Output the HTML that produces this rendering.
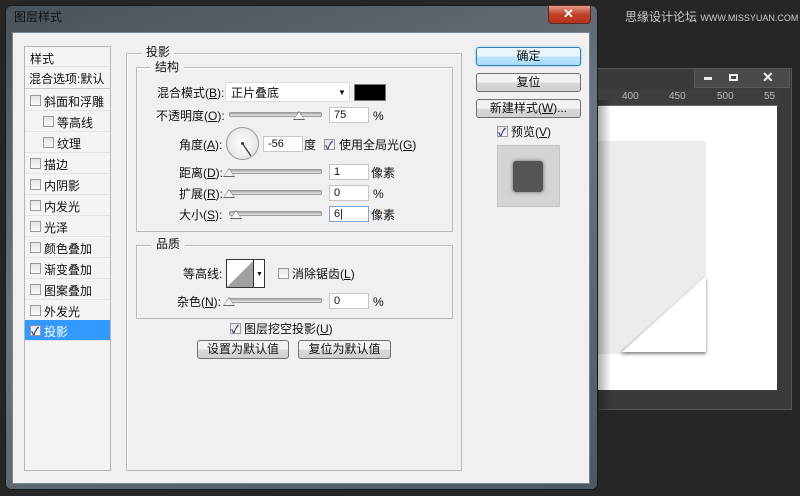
<!DOCTYPE html>
<html><head><meta charset="utf-8"><style>
*{margin:0;padding:0;box-sizing:border-box}
body{width:800px;height:496px;background:#262626;position:relative;overflow:hidden;font-family:"Liberation Sans","Noto Sans CJK SC",sans-serif;font-size:12px;color:#111}
.a{position:absolute}
.t{position:absolute;white-space:nowrap;line-height:14px}
.box{position:absolute;border:1px solid #b9b9b9;box-shadow:inset 1px 1px 0 #fff}
.cb{position:absolute;width:11px;height:11px;border:1px solid #9a9a9a;background:linear-gradient(#e4e4e4,#fafafa)}
.ck::after{content:"✓";position:absolute;left:0;top:-3px;font-size:11px;color:#2a3f8a;font-weight:bold}
.in{position:absolute;background:#fff;border:1px solid #c6c6c6;height:16px;font-size:11px;padding-left:4px;line-height:14px}
.sl{position:absolute;height:5px;border:1px solid #9c9c9c;border-radius:2px;background:linear-gradient(#aaa,#e6e6e6)}
.th{position:absolute;width:0;height:0;border-left:6px solid transparent;border-right:6px solid transparent;border-bottom:9px solid #666}
.th::after{content:"";position:absolute;left:-5px;top:1px;border-left:5px solid transparent;border-right:5px solid transparent;border-bottom:7px solid #f2f2f2}
.btn{position:absolute;height:19px;border:1px solid #707070;border-radius:3px;background:linear-gradient(#f2f2f2 50%,#d9d9d9 50%,#cfcfcf);text-align:center;line-height:17px;font-size:12px}
.li{position:absolute;left:25px;width:85px;height:21px;border-bottom:1px solid #e3e3e3}
.li .cb{left:5px;top:5px}
.li span{position:absolute;left:19px;top:3px}
</style></head><body>
<div class="t" style="left:625px;top:10px;color:#ccc;font-size:12px">思缘设计论坛 <span style="font-size:9px;letter-spacing:0">WWW.MISSYUAN.COM</span></div>
<div class="a" style="left:595px;top:68px;width:197px;height:342px;background:#3a3a3a;border:1px solid #555"></div>
<div class="a" style="left:694px;top:68px;width:96px;height:20px;background:#4a4a4a;border:1px solid #5a5a5a"></div>
<div class="a" style="left:704px;top:77px;width:8px;height:3px;background:#eee"></div>
<div class="a" style="left:729px;top:74px;width:9px;height:7px;border:2px solid #eee"></div>
<div class="t" style="left:762px;top:70px;color:#eee;font-size:14px;font-weight:bold">✕</div>
<div class="a" style="left:598px;top:90px;width:180px;height:16px;background:#3e3e3e;border-bottom:1px solid #666"></div>
<div class="t" style="left:622px;top:90px;color:#bbb;font-size:10px">400</div>
<div class="t" style="left:669px;top:90px;color:#bbb;font-size:10px">450</div>
<div class="t" style="left:717px;top:90px;color:#bbb;font-size:10px">500</div>
<div class="t" style="left:764px;top:90px;color:#bbb;font-size:10px">55</div>
<div class="a" style="left:598px;top:106px;width:179px;height:284px;background:#fff"></div>
<div class="a" style="left:598px;top:141px;width:108px;height:213px;background:#ececec"></div>
<svg class="a" style="left:598px;top:270px" width="112" height="90"><defs><filter id="f"><feGaussianBlur stdDeviation="1.5"/></filter></defs><polygon points="108,8 108,84 22,84" fill="#888" filter="url(#f)"/><polygon points="108,6 108,82 24,82" fill="#fff"/></svg>
<div class="a" style="left:597px;top:100px;width:14px;height:310px;background:linear-gradient(90deg,rgba(0,0,0,.35),rgba(0,0,0,0))"></div>
<div class="a" style="left:5px;top:5px;width:593px;height:485px;border-radius:6px;background:linear-gradient(160deg,#4a525a,#6a747c 45%,#4e5860);border:1px solid #1a1a1a"></div>
<div class="t" style="left:14px;top:10px;color:#111;font-size:12px">图层样式</div>
<div class="a" style="left:548px;top:5px;width:43px;height:19px;border-radius:0 0 4px 4px;background:linear-gradient(#e39a8a,#c1412a 50%,#b5321e);border:1px solid #5a2a22"></div>
<div class="t" style="left:563px;top:7px;color:#fff;font-size:13px;font-weight:bold">✕</div>
<div class="a" style="left:12px;top:32px;width:578px;height:452px;background:#f0f0f0;border:1px solid #7b8691"></div>
<div class="a" style="left:24px;top:46px;width:87px;height:425px;background:#f4f4f4;border:1px solid #b6b6b6"></div>
<div class="li" style="top:47px;height:20px"><span style="left:5px">样式</span></div>
<div class="li" style="top:67px;height:22px;border-bottom:1px solid #c8c8c8"><span style="left:4px;top:3px">混合选项:默认</span></div>
<div class="li" style="top:90px"><div class="cb"></div><span>斜面和浮雕</span></div>
<div class="li" style="top:111px"><div class="cb" style="left:18px"></div><span style="left:32px">等高线</span></div>
<div class="li" style="top:132px"><div class="cb" style="left:18px"></div><span style="left:32px">纹理</span></div>
<div class="li" style="top:153px"><div class="cb"></div><span>描边</span></div>
<div class="li" style="top:174px"><div class="cb"></div><span>内阴影</span></div>
<div class="li" style="top:195px"><div class="cb"></div><span>内发光</span></div>
<div class="li" style="top:216px"><div class="cb"></div><span>光泽</span></div>
<div class="li" style="top:237px"><div class="cb"></div><span>颜色叠加</span></div>
<div class="li" style="top:258px"><div class="cb"></div><span>渐变叠加</span></div>
<div class="li" style="top:279px"><div class="cb"></div><span>图案叠加</span></div>
<div class="li" style="top:300px"><div class="cb"></div><span>外发光</span></div>
<div class="li" style="top:320px;background:#3399ff;color:#fff"><div class="cb ck"></div><span>投影</span></div>
<div class="box" style="left:126px;top:53px;width:336px;height:418px"></div>
<div class="t" style="left:142px;top:45px;background:#f0f0f0;padding:0 4px">投影</div>
<div class="box" style="left:136px;top:67px;width:317px;height:165px"></div>
<div class="t" style="left:150px;top:60px;background:#f0f0f0;padding:0 5px">结构</div>
<div class="t" style="left:157px;top:86px">混合模式(<u>B</u>):</div>
<div class="a" style="left:225px;top:82px;width:125px;height:20px;background:#fff;border:1px solid #ddd"></div>
<div class="t" style="left:231px;top:86px">正片叠底</div>
<div class="t" style="left:338px;top:86px;font-size:8px">▼</div>
<div class="a" style="left:354px;top:84px;width:32px;height:17px;background:#000;border:1px solid #777"></div>
<div class="t" style="left:156px;top:109px">不透明度(<u>O</u>):</div>
<div class="sl" style="left:229px;top:112px;width:93px"></div><div class="th" style="left:293px;top:111px"></div>
<div class="in" style="left:329px;top:107px;width:40px">75</div><div class="t" style="left:373px;top:109px">%</div>
<div class="t" style="left:179px;top:138px">角度(<u>A</u>):</div>
<div class="a" style="left:226px;top:127px;width:33px;height:33px;border-radius:50%;border:1px solid #999;background:radial-gradient(#fff,#ddd)"></div>
<svg class="a" style="left:226px;top:127px" width="33" height="33"><line x1="16.5" y1="16.5" x2="25" y2="29" stroke="#333" stroke-width="1.2"/><circle cx="16.5" cy="16.5" r="1.5" fill="#333"/></svg>
<div class="in" style="left:263px;top:136px;width:40px">-56</div>
<div class="t" style="left:304px;top:138px">度</div>
<div class="cb ck" style="left:324px;top:139px"></div>
<div class="t" style="left:339px;top:138px">使用全局光(<u>G</u>)</div>
<div class="t" style="left:179px;top:166px">距离(<u>D</u>):</div>
<div class="sl" style="left:229px;top:169px;width:93px"></div><div class="th" style="left:223px;top:168px"></div>
<div class="in" style="left:329px;top:164px;width:40px">1</div><div class="t" style="left:371px;top:166px">像素</div>
<div class="t" style="left:179px;top:187px">扩展(<u>R</u>):</div>
<div class="sl" style="left:229px;top:190px;width:93px"></div><div class="th" style="left:223px;top:189px"></div>
<div class="in" style="left:329px;top:185px;width:40px">0</div><div class="t" style="left:373px;top:187px">%</div>
<div class="t" style="left:179px;top:208px">大小(<u>S</u>):</div>
<div class="sl" style="left:229px;top:211px;width:93px"></div><div class="th" style="left:230px;top:210px"></div>
<div class="in" style="left:329px;top:206px;width:40px;border-color:#7aa7d6">6|</div><div class="t" style="left:371px;top:208px">像素</div>
<div class="box" style="left:136px;top:245px;width:317px;height:74px"></div>
<div class="t" style="left:151px;top:237px;background:#f0f0f0;padding:0 5px">品质</div>
<div class="t" style="left:183px;top:267px">等高线:</div>
<div class="a" style="left:226px;top:259px;width:39px;height:29px;background:#fff;border:1px solid #333"></div>
<svg class="a" style="left:227px;top:260px" width="28" height="27"><polygon points="27,0 27,27 0,27" fill="#a0a0a0"/></svg>
<div class="a" style="left:253px;top:260px;width:1px;height:27px;background:#333"></div>
<div class="t" style="left:256px;top:268px;font-size:7px">▼</div>
<div class="cb" style="left:278px;top:268px"></div>
<div class="t" style="left:292px;top:267px">消除锯齿(<u>L</u>)</div>
<div class="t" style="left:177px;top:295px">杂色(<u>N</u>):</div>
<div class="sl" style="left:229px;top:298px;width:93px"></div><div class="th" style="left:223px;top:297px"></div>
<div class="in" style="left:329px;top:293px;width:40px">0</div><div class="t" style="left:373px;top:295px">%</div>
<div class="cb ck" style="left:230px;top:323px"></div>
<div class="t" style="left:244px;top:322px">图层挖空投影(<u>U</u>)</div>
<div class="btn" style="left:197px;top:340px;width:92px">设置为默认值</div>
<div class="btn" style="left:298px;top:340px;width:93px">复位为默认值</div>
<div class="btn" style="left:476px;top:47px;width:105px;border-color:#3c7fb1;background:linear-gradient(#eaf6fd 50%,#bee6fd 50%,#a7d9f5);box-shadow:0 0 2px #5ec6f7">确定</div>
<div class="btn" style="left:476px;top:73px;width:105px">复位</div>
<div class="btn" style="left:476px;top:99px;width:105px">新建样式(<u>W</u>)...</div>
<div class="cb ck" style="left:497px;top:126px"></div>
<div class="t" style="left:511px;top:125px">预览(<u>V</u>)</div>
<div class="a" style="left:497px;top:145px;width:63px;height:62px;background:#d4d4d4;border:1px solid #c4c4c4"></div>
<div class="a" style="left:513px;top:161px;width:30px;height:31px;background:#555;border-radius:3px;box-shadow:0 0 4px #666"></div>
</body></html>
